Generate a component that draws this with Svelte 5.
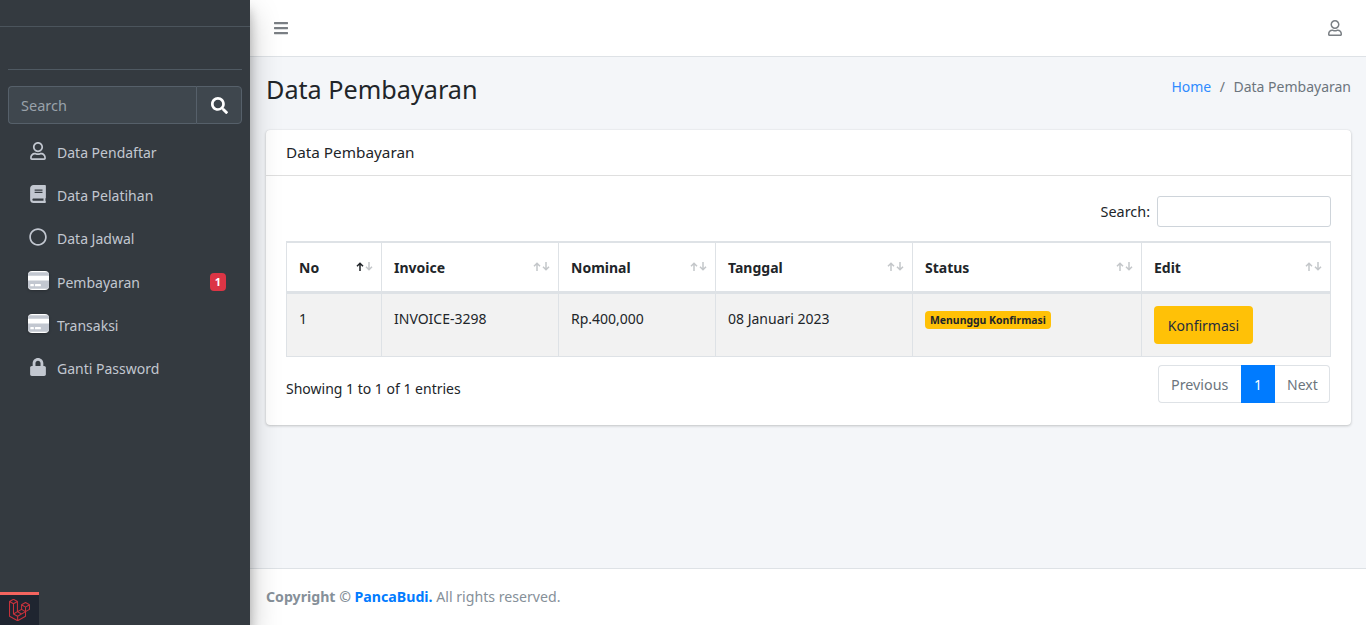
<script>
	const icons = {
		user: ['0 0 448 512', 'M313.6 304c-28.7 0-42.5 16-89.6 16-47.1 0-60.8-16-89.6-16C60.2 304 0 364.2 0 438.4V464c0 26.5 21.5 48 48 48h352c26.5 0 48-21.5 48-48v-25.6c0-74.2-60.2-134.4-134.4-134.4zM400 464H48v-25.6c0-47.6 38.8-86.4 86.4-86.4 14.6 0 38.3 16 89.6 16 51.7 0 74.9-16 89.6-16 47.6 0 86.4 38.8 86.4 86.4V464zM224 288c79.5 0 144-64.5 144-144S303.5 0 224 0 80 64.5 80 144s64.5 144 144 144zm0-240c52.9 0 96 43.1 96 96s-43.1 96-96 96-96-43.1-96-96 43.1-96 96-96z'],
		book: ['0 0 448 512', 'M448 360V24c0-13.3-10.7-24-24-24H96C43 0 0 43 0 96v320c0 53 43 96 96 96h328c13.3 0 24-10.7 24-24v-16c0-7.5-3.5-14.3-8.9-18.7-4.2-15.4-4.2-59.3 0-74.7 5.4-4.3 8.9-11.1 8.9-18.6zM128 134c0-3.3 2.7-6 6-6h212c3.3 0 6 2.7 6 6v20c0 3.3-2.7 6-6 6H134c-3.3 0-6-2.7-6-6v-20zm0 64c0-3.3 2.7-6 6-6h212c3.3 0 6 2.7 6 6v20c0 3.3-2.7 6-6 6H134c-3.3 0-6-2.7-6-6v-20zm253.4 250H96c-17.7 0-32-14.3-32-32 0-17.6 14.4-32 32-32h285.4c-1.9 17.1-1.9 46.9 0 64z'],
		circle: ['0 0 512 512', 'M256 8C119 8 8 119 8 256s111 248 248 248 248-111 248-248S393 8 256 8zm0 448c-110.5 0-200-89.5-200-200S145.5 56 256 56s200 89.5 200 200-89.5 200-200 200z'],
		card: ['0 0 576 512', 'M0 432c0 26.5 21.5 48 48 48h480c26.5 0 48-21.5 48-48V256H0v176zm192-68c0-6.6 5.4-12 12-12h136c6.6 0 12 5.4 12 12v40c0 6.6-5.4 12-12 12H204c-6.6 0-12-5.4-12-12v-40zm-128 0c0-6.6 5.4-12 12-12h72c6.6 0 12 5.4 12 12v40c0 6.6-5.4 12-12 12H76c-6.6 0-12-5.4-12-12v-40zM576 80v48H0V80c0-26.5 21.5-48 48-48h480c26.5 0 48 21.5 48 48z'],
		lock: ['0 0 448 512', 'M400 224h-24v-72C376 68.2 307.8 0 224 0S72 68.2 72 152v72H48c-26.5 0-48 21.5-48 48v192c0 26.5 21.5 48 48 48h352c26.5 0 48-21.5 48-48V272c0-26.5-21.5-48-48-48zm-104 0H152v-72c0-39.7 32.3-72 72-72s72 32.3 72 72v72z'],
		search: ['0 0 512 512', 'M505 442.7L405.3 343c-4.5-4.5-10.6-7-17-7H372c27.6-35.3 44-79.7 44-128C416 93.1 322.9 0 208 0S0 93.1 0 208s93.1 208 208 208c48.3 0 92.7-16.4 128-44v16.3c0 6.4 2.5 12.5 7 17l99.7 99.7c9.4 9.4 24.6 9.4 33.9 0l28.3-28.3c9.4-9.4 9.4-24.6.1-34zM208 336c-70.7 0-128-57.2-128-128 0-70.7 57.2-128 128-128 70.7 0 128 57.2 128 128 0 70.7-57.2 128-128 128z'],
		bars: ['0 0 448 512', 'M16 132h416c8.837 0 16-7.163 16-16V76c0-8.837-7.163-16-16-16H16C7.163 60 0 67.163 0 76v40c0 8.837 7.163 16 16 16zm0 160h416c8.837 0 16-7.163 16-16v-40c0-8.837-7.163-16-16-16H16c-8.837 0-16 7.163-16 16v40c0 8.837 7.163 16 16 16zm0 160h416c8.837 0 16-7.163 16-16v-40c0-8.837-7.163-16-16-16H16c-8.837 0-16 7.163-16 16v40c0 8.837 7.163 16 16 16z']
	};

	const menu = [
		{ label: 'Data Pendaftar', icon: 'user' },
		{ label: 'Data Pelatihan', icon: 'book' },
		{ label: 'Data Jadwal', icon: 'circle' },
		{ label: 'Pembayaran', icon: 'card', badge: 1 },
		{ label: 'Transaksi', icon: 'card' },
		{ label: 'Ganti Password', icon: 'lock' }
	];

	const columns = [
		{ label: 'No', width: 95, sorted: true },
		{ label: 'Invoice', width: 177 },
		{ label: 'Nominal', width: 157 },
		{ label: 'Tanggal', width: 197 },
		{ label: 'Status', width: 229 },
		{ label: 'Edit', width: 189 }
	];
</script>

{#snippet icon(name, cls)}
	<svg class={cls} viewBox={icons[name][0]} aria-hidden="true"><path fill="currentColor" d={icons[name][1]} /></svg>
{/snippet}

<div class="wrapper">
	<aside class="sidebar">
		<div class="brand"></div>
		<div class="panel">
			<div class="user-panel"></div>
			<form class="search">
				<input placeholder="Search" />
				<button type="button" aria-label="Search">{@render icon('search', 'search-icon')}</button>
			</form>
			<ul class="nav">
				{#each menu as item}
					<li>
						<span class="nav-icon">{@render icon(item.icon, 'nav-svg ' + item.icon)}</span>
						<span class="nav-label">{item.label}</span>
						{#if item.badge}<span class="nav-badge">{item.badge}</span>{/if}
					</li>
				{/each}
			</ul>
		</div>
	</aside>

	<div class="main">
		<nav class="topbar">
			{@render icon('bars', 'bars')}
			{@render icon('user', 'top-user')}
		</nav>

		<main class="content">
			<header class="content-head">
				<h1>Data Pembayaran</h1>
				<div class="crumbs"><a href="#home">Home</a><span class="sep">/</span><span>Data Pembayaran</span></div>
			</header>

			<section class="card">
				<div class="card-head">Data Pembayaran</div>
				<div class="card-body">
					<label class="filter">Search: <input type="search" /></label>
					<table>
						<colgroup>
							{#each columns as col}<col style="width: {col.width}px" />{/each}
						</colgroup>
						<thead>
							<tr>
								{#each columns as col}
									<th>
										<div class="th-inner">
											<span>{col.label}</span>
											<span class="sort">
												<svg class:active={col.sorted} viewBox="0 0 8 9" aria-hidden="true"><path d="M4 9V1.2M1 4.2l3-3 3 3" /></svg>
												<svg viewBox="0 0 8 9" aria-hidden="true"><path d="M4 0v7.8M1 4.8l3 3 3-3" /></svg>
											</span>
										</div>
									</th>
								{/each}
							</tr>
						</thead>
						<tbody>
							<tr>
								<td>1</td>
								<td>INVOICE-3298</td>
								<td>Rp.400,000</td>
								<td>08 Januari 2023</td>
								<td><span class="badge">Menunggu Konfirmasi</span></td>
								<td class="btn-cell"><button type="button" class="btn">Konfirmasi</button></td>
							</tr>
						</tbody>
					</table>
					<div class="table-foot">
						<div class="info">Showing 1 to 1 of 1 entries</div>
						<ul class="pager">
							<li class="end-l">Previous</li>
							<li class="current">1</li>
							<li class="end-r">Next</li>
						</ul>
					</div>
				</div>
			</section>
		</main>

		<footer class="footer">
			<strong>Copyright © <a href="#pb">PancaBudi.</a></strong> All rights reserved.
		</footer>
	</div>

	<div class="debugbar">
		<svg viewBox="0 0 50 53" width="21" height="22" aria-hidden="true">
			<path fill="none" stroke="currentColor" stroke-width="2.5" stroke-linejoin="round" d="M1 6V41.5L20.5 52.5L39.5 41.5V30.5L49 25V14L39.5 8.5L30 14V25L20 30.5V6L10.5 .5ZM1 6L10.5 11.5L20 6M10.5 11.5V36L20.5 41.5L39.5 30.5M20.5 41.5V52.5M10.5 36L20 30.5L30 36M30 25L39.5 30.5M30 14L39.5 19.5L49 14M39.5 19.5V30.5" />
		</svg>
	</div>
</div>

<style>
	:global(body) {
		margin: 0;
		font-family: 'Noto Sans', 'Open Sans', sans-serif;
		font-size: 14px;
		color: #212529;
		background: #f4f6f9;
	}

	.wrapper {
		display: flex;
		height: 625px;
		overflow: hidden;
	}

	.sidebar {
		flex: 0 0 250px;
		width: 250px;
		min-width: 0;
		background: #343a40;
		box-shadow: 0 14px 28px rgba(0, 0, 0, 0.25), 0 10px 10px rgba(0, 0, 0, 0.22);
		position: relative;
		z-index: 2;
	}

	.brand {
		height: 26px;
		border-bottom: 1px solid #4b545c;
	}

	.panel {
		padding: 0 8px;
	}

	.user-panel {
		height: 42px;
		border-bottom: 1px solid #4f5962;
	}

	.search {
		display: flex;
		height: 38px;
		margin-top: 16px;
	}

	.search input {
		flex: 1;
		width: 0;
		min-width: 0;
		box-sizing: border-box;
		padding: 0 12px;
		background: #3f474e;
		border: 1px solid #56606a;
		border-right: 0;
		border-radius: 4px 0 0 4px;
		color: #fff;
		font: inherit;
		font-size: 14.5px;
		outline: 0;
	}

	.search input::placeholder {
		color: #99a2aa;
		opacity: 1;
	}

	.search button {
		flex: 0 0 46px;
		display: flex;
		align-items: center;
		justify-content: center;
		padding: 0;
		background: #3f474e;
		border: 1px solid #56606a;
		border-radius: 0 4px 4px 0;
		color: #fff;
	}

	.search-icon {
		width: 17px;
		height: 17px;
	}

	.nav {
		list-style: none;
		margin: 7px 0 0;
		padding: 0;
	}

	.nav li {
		display: flex;
		align-items: center;
		height: 43.2px;
		color: #c2c7d0;
	}

	.nav-icon {
		flex: 0 0 49px;
		display: flex;
		justify-content: center;
		padding-left: 11px;
		box-sizing: border-box;
		margin-top: -3px;
	}

	.nav-svg {
		height: 18px;
		width: auto;
		display: block;
	}

	.nav-svg.user,
	.nav-svg.book,
	.nav-svg.lock {
		width: 16px;
	}

	.nav-svg.card {
		width: 21px;
		height: 19px;
	}

	.nav-label {
		flex: 1;
	}

	.nav-badge {
		margin-right: 16px;
		width: 16px;
		height: 18px;
		border-radius: 4px;
		background: #dc3545;
		color: #fff;
		font-size: 11px;
		font-weight: 700;
		line-height: 18px;
		text-align: center;
	}

	.main {
		flex: 1;
		min-width: 0;
		display: flex;
		flex-direction: column;
	}

	.topbar {
		flex: 0 0 56px;
		display: flex;
		align-items: center;
		justify-content: space-between;
		padding: 0 24px;
		background: #fff;
		border-bottom: 1px solid #dee2e6;
	}

	.bars {
		width: 14px;
		height: 16px;
		color: #7a7f84;
	}

	.top-user {
		width: 14px;
		height: 16px;
		color: #7a7f84;
	}

	.content {
		flex: 1;
		padding: 0 15px 0 16px;
	}

	.content-head {
		display: flex;
		justify-content: space-between;
		height: 73px;
	}

	h1 {
		margin: 14px 0 0;
		font-size: 25.2px;
		font-weight: 400;
		line-height: 37px;
	}

	.crumbs {
		margin-top: 18px;
		line-height: 24px;
		color: #6c757d;
	}

	.crumbs a {
		color: #2f8bff;
		text-decoration: none;
	}

	.sep {
		padding: 0 8.5px;
	}

	.card {
		background: #fff;
		border-radius: 4px;
		box-shadow: 0 0 1px rgba(0, 0, 0, 0.125), 0 1px 3px rgba(0, 0, 0, 0.2);
	}

	.card-head {
		height: 45px;
		padding: 0 20px;
		font-size: 15.3px;
		line-height: 45px;
		border-bottom: 1px solid rgba(0, 0, 0, 0.125);
	}

	.card-body {
		padding: 20px 20px 22px;
	}

	.filter {
		display: flex;
		justify-content: flex-end;
		align-items: center;
		gap: 7px;
		height: 31px;
		font-size: 14.4px;
	}

	.filter input {
		box-sizing: border-box;
		width: 174px;
		height: 31px;
		border: 1px solid #ced4da;
		border-radius: 3px;
		background: #fff;
		outline: 0;
	}

	table {
		width: 1044px;
		margin-top: 14px;
		border-collapse: collapse;
		table-layout: fixed;
	}

	th,
	td {
		border: 1px solid #dee2e6;
		padding: 12px;
		text-align: left;
		vertical-align: top;
	}

	thead th {
		height: 50px;
		box-sizing: border-box;
		border-top-width: 2px;
		border-bottom-width: 3px;
		padding-top: 13px;
		padding-bottom: 11px;
		font-weight: 700;
		vertical-align: middle;
	}

	.th-inner {
		display: flex;
		justify-content: space-between;
		align-items: center;
		margin-right: -3.5px;
	}

	.sort {
		display: flex;
		gap: 1px;
		margin-top: -2px;
		color: #c4c7ca;
	}

	.sort svg {
		width: 8px;
		height: 9px;
		display: block;
	}

	.sort path {
		fill: none;
		stroke: currentColor;
		stroke-width: 1.5;
	}

	.sort .active {
		color: #212529;
	}

	tbody tr {
		background: #f2f2f2;
		height: 63px;
	}

	td {
		padding-top: 13px;
		line-height: 24px;
	}

	.badge {
		display: inline-block;
		padding: 0 5px;
		height: 18px;
		line-height: 18px;
		border-radius: 4px;
		background: #ffc107;
		font-size: 10.45px;
		font-weight: 700;
		vertical-align: 0;
	}

	td.btn-cell {
		padding: 12px;
	}

	.btn {
		height: 38px;
		width: 99px;
		padding: 2px 0 0;
		border: 0;
		border-radius: 4px;
		background: #ffc107;
		color: #1f2d3d;
		font: inherit;
		display: block;
	}

	.table-foot {
		display: flex;
		justify-content: space-between;
		margin-top: 8px;
		padding-right: 1px;
	}

	.info {
		padding-top: 12px;
		line-height: 24px;
	}

	.pager {
		display: flex;
		list-style: none;
		margin: 0;
		padding: 0;
		height: 38px;
		line-height: 38px;
		color: #6c757d;
	}

	.pager li {
		box-sizing: border-box;
		border: 1px solid #dee2e6;
		padding: 0 12px;
		height: 38px;
	}

	.pager .end-l {
		border-right: 0;
		border-radius: 4px 0 0 4px;
		width: 83px;
		font-size: 14.3px;
	}

	.pager .end-r {
		border-left: 0;
		border-radius: 0 4px 4px 0;
		width: 55px;
	}

	.pager .current {
		width: 34px;
		background: #007bff;
		border-color: #007bff;
		color: #fff;
		text-align: center;
		padding: 0;
	}

	.footer {
		flex: 0 0 57px;
		box-sizing: border-box;
		padding: 0 16px;
		line-height: 56px;
		font-size: 14.15px;
		background: #fff;
		border-top: 1px solid #dee2e6;
		color: #869099;
	}

	.footer a {
		color: #007bff;
		text-decoration: none;
	}

	.debugbar {
		position: fixed;
		left: 0;
		bottom: 0;
		width: 39px;
		height: 30px;
		border-top: 3px solid #f4645f;
		background: #1f2530;
		color: #c8323c;
		z-index: 3;
		display: flex;
		align-items: center;
		justify-content: center;
	}
</style>
